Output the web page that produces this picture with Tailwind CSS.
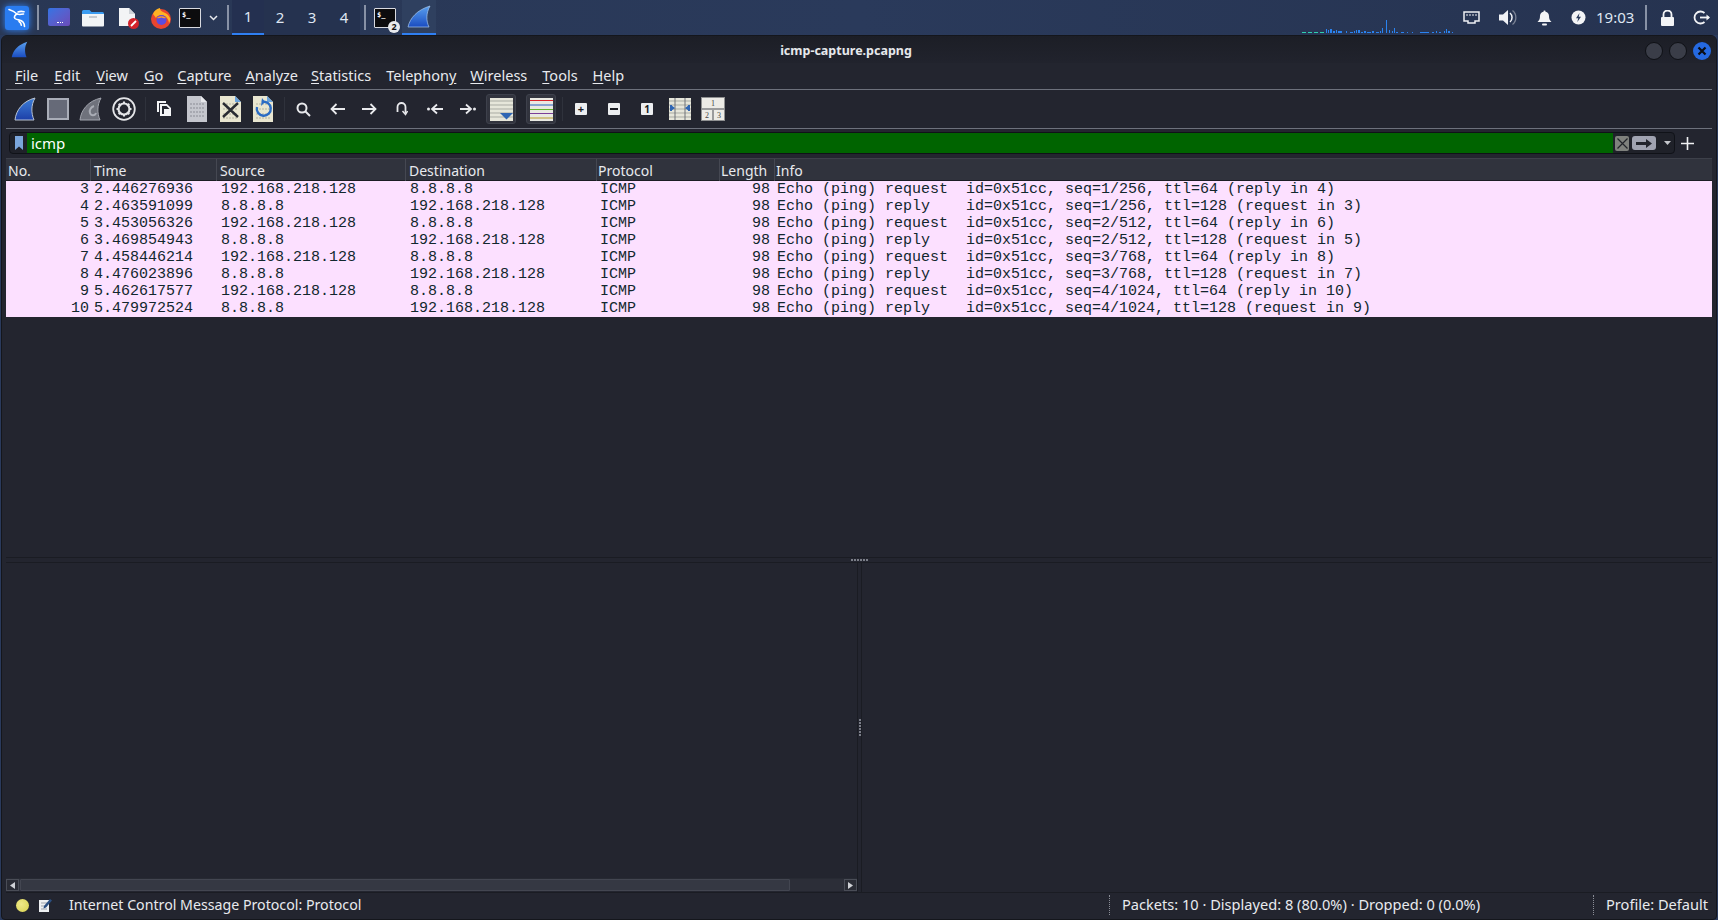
<!DOCTYPE html>
<html>
<head>
<meta charset="utf-8">
<script src="https://cdn.jsdelivr.net/npm/@tailwindcss/browser@4"></script>
<title>icmp-capture.pcapng</title>
</head>
<body class="w-[1718px] h-[920px] overflow-hidden bg-[#2a3a5c] font-['Noto_Sans','Open_Sans',sans-serif] text-[14px] text-[#e8eaee]">
<svg width="0" height="0" class="absolute">
  <defs>
    <linearGradient id="fin" x1="0" y1="0" x2="0" y2="1"><stop offset="0" stop-color="#3d7fd8"/><stop offset="1" stop-color="#1c3fa8"/></linearGradient>
    <linearGradient id="finb" x1="0" y1="0" x2="0" y2="1"><stop offset="0" stop-color="#5aa0ee"/><stop offset="1" stop-color="#1a4cc0"/></linearGradient>
  </defs>
</svg>

<!-- top panel -->
<header class="h-[35px] flex items-stretch bg-gradient-to-r from-[#293754] via-[#2a3a5b] to-[#263350] relative">
  <div class="w-[34px] flex items-center justify-center">
    <div class="w-[24px] h-[24px] rounded-[3px] bg-[#2a7cf0] shadow-[0_0_7px_#2f86ff] flex items-center justify-center">
      <svg width="22" height="22" viewBox="0 0 22 22" fill="none" stroke="#fff" stroke-width="1.6" stroke-linecap="round" stroke-linejoin="round"><path d="M3 2.500c3.500 1 6 2.500 8 4.500 2 .8 4 .5 6.500 0"/><path d="M12 5c2-.8 4-.8 6-.2"/><path d="M11 7c-2 1-3.500 3-2 4.500 2 1.800 6 1 8 3.500 1 1.300 1.500 3 1.500 4.500"/><path d="M13 14.500c1.500.8 2.200 2.300 2.300 3.700"/></svg>
    </div>
  </div>
  <div class="w-[2px] h-[25px] self-center bg-[#8892a6] ml-[3px]"></div>
  <div class="ml-[9px] w-[22px] self-center h-[18px] rounded-[2px] bg-gradient-to-br from-[#2f74e4] to-[#6a4bb8] relative mt-[-1px]"><span class="absolute bottom-[3px] left-[9px] w-[6px] h-[1px] border-b border-dotted border-white"></span></div>
  <svg class="ml-[12px] self-center" width="22" height="18" viewBox="0 0 22 18"><path d="M0 2.500a1.500 1.500 0 0 1 1.500-1.500h6l2 2h11a1.500 1.500 0 0 1 1.500 1.500v1H0z" fill="#3b9cf2"/><path d="M0 5h22v11.500a1 1 0 0 1-1 1H1a1 1 0 0 1-1-1z" fill="#f2f4f6"/><rect x="7" y="7" width="8" height="2" fill="#c6cbd2"/></svg>
  <svg class="ml-[14px] self-center" width="22" height="22" viewBox="0 0 22 22"><path d="M1 1h10l6 6v12H1z" fill="#f3f4f5"/><path d="M11 1l6 6h-6z" fill="#cfd3d8"/><circle cx="15.500" cy="16.500" r="5.500" fill="#d3232b"/><path d="M13 19l5-5" stroke="#fff" stroke-width="1.800"/></svg>
  <svg class="ml-[10px] self-center" width="22" height="22" viewBox="0 0 22 22"><circle cx="11" cy="12" r="10" fill="#e8452f"/><path d="M3 7c1-3 4-5.500 7-6 0 2 1 3 3 4 3 1 6 3 7 6 .5 2-.5 5-1 5-.5-4-3-7-6-7.500C9 8 7 9 6 11z" fill="#ffb224"/><circle cx="11.500" cy="13" r="5" fill="#5a4de0"/><path d="M7 11c2-2.500 7-2.500 9 0-2 .6-3 .3-4.500-.5-1.500.7-3 1-4.500.5z" fill="#ff9a2b"/></svg>
  <div class="ml-[7px] self-center w-[22px] h-[20px] bg-[#0c0c0e] border border-[#d8dae0] rounded-[1px] text-white font-['DejaVu_Sans_Mono',monospace] text-[7px] font-bold leading-[12px] pl-[2px]">$_</div>
  <svg class="ml-[8px] self-center" width="9" height="6" viewBox="0 0 9 6" fill="none" stroke="#e8eaee" stroke-width="1.500"><path d="M1 1l3.500 3.500L8 1"/></svg>
  <div class="w-[2px] h-[25px] self-center bg-[#8892a6] ml-[9px]"></div>
  <div class="ml-[3px] flex text-[15px] text-[#dfe6f2]">
    <div class="w-[32px] flex items-center justify-center bg-[#243050] border-b-[2px] border-[#2f7ff2]">1</div>
    <div class="w-[32px] flex items-center justify-center bg-[#25324f]">2</div>
    <div class="w-[32px] flex items-center justify-center bg-[#25324f]">3</div>
    <div class="w-[32px] flex items-center justify-center bg-[#25324f]">4</div>
  </div>
  <div class="w-[2px] h-[25px] self-center bg-[#8892a6] ml-[4px]"></div>
  <div class="ml-[8px] relative self-center w-[22px] h-[20px] bg-[#0c0c0e] border border-[#d8dae0] rounded-[1px] text-white font-['DejaVu_Sans_Mono',monospace] text-[7px] font-bold leading-[12px] pl-[2px]">$_<span class="absolute right-[-5px] bottom-[-6px] w-[12px] h-[12px] rounded-full bg-[#e8eaee] text-[#111] text-[9px] leading-[12px] text-center font-['Noto_Sans'] font-bold pl-0">2</span></div>
  <div class="ml-[6px] w-[34px] flex items-center justify-center bg-[#2f405f] border-b-[2px] border-[#2f7ff2]">
    <svg width="24" height="24" viewBox="0 0 24 24"><path d="M1 22C3 13 10 5 23 1c-4 7-4 15-1 21z" fill="url(#finb)" stroke="#a6c8ef" stroke-width=".7"/></svg>
  </div>
  <div class="flex-1"></div>
  <!-- net graph -->
  <svg class="absolute left-[1302px] top-[18px]" width="155" height="17" viewBox="0 0 155 17">
    <g fill="#2fd0b0"><rect x="0" y="14" width="4" height="1"/><rect x="6" y="14" width="4" height="1"/><rect x="12" y="14" width="4" height="1"/><rect x="18" y="14" width="4" height="1"/></g>
    <g fill="#2a83f0"><rect x="24" y="11" width="1" height="4"/><rect x="26" y="12" width="1" height="3"/><rect x="28" y="11" width="2" height="4"/><rect x="31" y="13" width="2" height="2"/><rect x="34" y="12" width="1" height="3"/><rect x="36" y="13" width="4" height="2"/><rect x="44" y="13" width="1" height="2"/><rect x="48" y="14" width="3" height="1"/><rect x="52" y="13" width="1" height="2"/><rect x="54" y="12" width="1" height="3"/><rect x="56" y="12" width="2" height="3"/><rect x="59" y="14" width="2" height="1"/><rect x="62" y="13" width="2" height="2"/><rect x="65" y="14" width="4" height="1"/><rect x="70" y="13" width="2" height="2"/><rect x="74" y="14" width="3" height="1"/><rect x="78" y="13" width="1" height="2"/><rect x="80" y="10" width="1" height="5"/><rect x="84" y="14" width="1" height="1"/><rect x="87" y="12" width="1" height="3"/><rect x="90" y="13" width="1" height="2"/><rect x="92" y="10" width="1" height="5"/><rect x="94" y="14" width="2" height="1"/><rect x="84" y="2" width="1" height="13"/><rect x="99" y="14" width="3" height="1"/><rect x="105" y="14" width="1" height="1"/><rect x="110" y="14" width="1" height="1"/><rect x="118" y="14" width="9" height="1"/><rect x="130" y="14" width="2" height="1"/><rect x="134" y="13" width="1" height="2"/><rect x="137" y="14" width="2" height="1"/><rect x="142" y="13" width="1" height="2"/><rect x="144" y="11" width="1" height="4"/><rect x="146" y="13" width="2" height="2"/><rect x="150" y="14" width="1" height="1"/></g>
  </svg>
  <div class="flex items-center">
    <svg class="mr-[19px]" width="17" height="13" viewBox="0 0 17 13" fill="none" stroke="#eef0f4" stroke-width="1.500"><path d="M1 1h15v9h-4v2H5v-2H1z"/><path d="M4 3v2M7 3v2M10 3v2M13 3v2" stroke-width="1"/></svg>
    <svg class="mr-[20px]" width="18" height="17" viewBox="0 0 18 17"><path d="M0 5.500h4L9 1v15l-5-4.500H0z" fill="#f0f2f6"/><path d="M11 4a6 6 0 0 1 0 9" fill="none" stroke="#f0f2f6" stroke-width="1.500"/><path d="M13.500 1.500a9 9 0 0 1 0 14" fill="none" stroke="#7a8294" stroke-width="1.300"/></svg>
    <svg class="mr-[19px]" width="15" height="16" viewBox="0 0 15 16"><path d="M7.500 0.500a1 1 0 0 1 1 1.200 4.500 4.500 0 0 1 3.500 4.300c0 3 .8 4.500 2.500 6H.5C2.200 10.500 3 9 3 6a4.500 4.500 0 0 1 3.500-4.300 1 1 0 0 1 1-1.200z" fill="#f3f4f6"/><rect x="5" y="13.500" width="5" height="2" rx="1" fill="#f3f4f6"/></svg>
    <svg class="mr-[10px]" width="15" height="15" viewBox="0 0 15 15"><circle cx="7.500" cy="7.500" r="7" fill="#f3f4f6"/><path d="M8.500 3L5 8.200h2.200L6.300 12l3.700-5.300H7.700z" fill="#2a3a5b"/></svg>
    <span class="text-[15px] text-[#dfe6f2] mr-[12px] w-[37px]">19:03</span>
    <div class="w-[2px] h-[25px] bg-[#8892a6] mr-[13px]"></div>
    <svg class="mr-[18px]" width="15" height="16" viewBox="0 0 15 16"><path d="M3.500 7V4.500a4 4 0 0 1 8 0V7" fill="none" stroke="#f3f4f6" stroke-width="1.800"/><rect x="1" y="7" width="13" height="9" rx="1" fill="#f3f4f6"/></svg>
    <svg class="mr-[6px]" width="19" height="15" viewBox="0 0 19 15" fill="none" stroke="#f3f4f6" stroke-width="1.800"><path d="M11.500 3A6 6 0 1 0 11.500 12"/><path d="M7 7.500h9"/><path d="M13.500 4.500l3.500 3-3.500 3z" fill="#f3f4f6" stroke="none"/></svg>
  </div>
</header>

<!-- window -->
<main class="h-[885px] mx-[1px] rounded-t-[6px] rounded-b-[4px] border border-[#14161c] bg-[#23252f] flex flex-col overflow-hidden">
  <div class="h-[27px] shrink-0 bg-gradient-to-b from-[#1c1e26] to-[#21232d] flex items-center relative">
    <svg class="ml-[9px]" width="17" height="17" viewBox="0 0 24 24"><path d="M1 23C3 13 10 5 23 1c-4 7-4 15-1 22z" fill="url(#finb)"/></svg>
    <div class="absolute left-0 right-[26px] top-[7px] text-center text-[12.5px] leading-[16px] font-bold text-[#e6e8ec]">icmp-capture.pcapng</div>
    <div class="ml-auto flex gap-[6px] mr-[5px] mt-[2px] relative">
      <div class="w-[18px] h-[18px] rounded-full bg-[#3a3d48] border border-[#0e1015]"></div>
      <div class="w-[18px] h-[18px] rounded-full bg-[#3a3d48] border border-[#0e1015]"></div>
      <div class="w-[18px] h-[18px] rounded-full bg-[#2569e0] flex items-center justify-center"><svg width="10" height="10" viewBox="0 0 10 10" stroke="#0b0d12" stroke-width="2.200"><path d="M1.500 1.500l7 7M8.500 1.500l-7 7"/></svg></div>
    </div>
  </div>

  <nav class="h-[27px] shrink-0 mx-[4px] flex items-center border-b border-[#6d717c] text-[14.5px]">
    <span class="ml-[9px] mr-[16px]"><span class="underline underline-offset-2">F</span>ile</span>
    <span class="mr-[16px]"><span class="underline underline-offset-2">E</span>dit</span>
    <span class="mr-[16px]"><span class="underline underline-offset-2">V</span>iew</span>
    <span class="mr-[14px]"><span class="underline underline-offset-2">G</span>o</span>
    <span class="mr-[14px]"><span class="underline underline-offset-2">C</span>apture</span>
    <span class="mr-[13px]"><span class="underline underline-offset-2">A</span>nalyze</span>
    <span class="mr-[15px]"><span class="underline underline-offset-2">S</span>tatistics</span>
    <span class="mr-[14px]">Telephon<span class="underline underline-offset-2">y</span></span>
    <span class="mr-[15px]"><span class="underline underline-offset-2">W</span>ireless</span>
    <span class="mr-[15px]"><span class="underline underline-offset-2">T</span>ools</span>
    <span><span class="underline underline-offset-2">H</span>elp</span>
  </nav>

  <!-- toolbar -->
  <div class="h-[39px] shrink-0 mx-[4px] border-b border-[#6d717c] flex items-center pl-[8px]">
    <svg width="22" height="24" viewBox="0 0 22 24"><path d="M1 23C2 13 9 4 21 1c-4 7-4 15-1 22z" fill="url(#fin)" stroke="#b9c3d2" stroke-width="1"/></svg>
    <div class="ml-[11px] w-[22px] h-[22px] bg-[#666a78] border-[2px] border-[#a9adb8]"></div>
    <svg class="ml-[10px]" width="23" height="24" viewBox="0 0 23 24"><path d="M1 23C2 13 9 4 22 1c-4 7-4 15-1 22z" fill="#6f727c" stroke="#a2a5ae" stroke-width="1"/><path d="M15 9c-3 1-5 4-4 7s5 3 6 0" fill="none" stroke="#a9acb5" stroke-width="2"/></svg>
    <svg class="ml-[10px]" width="24" height="24" viewBox="0 0 24 24" fill="none"><circle cx="12" cy="12" r="10.800" stroke="#e4e5e8" stroke-width="1.800"/><circle cx="12" cy="12" r="5.500" stroke="#e4e5e8" stroke-width="2.200"/><g stroke="#e4e5e8" stroke-width="2"><path d="M12 4.500v2.500M12 17v2.500M4.500 12H7M17 12h2.500M6.700 6.700l1.800 1.800M15.500 15.500l1.800 1.800M17.300 6.700l-1.800 1.800M8.500 15.500l-1.800 1.800"/></g></svg>
    <div class="ml-[9px] mr-[11px] w-px h-[24px] bg-[#2f323c]"></div>
    <svg width="15" height="16" viewBox="0 0 15 16"><path d="M0 0h9v2H2v9H0z" fill="#f3f4f6"/><path d="M3 3h7l4 4v8H3z" fill="#f3f4f6"/><path d="M5 5h4.500l2.500 2.500V13H5z" fill="#23252f"/><path d="M7 8h5v5H7z" fill="#f3f4f6"/></svg>
    <svg class="ml-[15px]" width="20" height="26" viewBox="0 0 20 26"><path d="M0 0h14l6 6v20H0z" fill="#c4c6cd"/><path d="M14 0l6 6h-6z" fill="#e8e9ec"/><g stroke="#898c96" stroke-width="1.200" stroke-dasharray="2 1"><path d="M3 8h14M3 12h14M3 16h14M3 20h14"/></g></svg>
    <svg class="ml-[13px]" width="21" height="26" viewBox="0 0 21 26"><path d="M0 0h15l6 6v20H0z" fill="#e9e6d0"/><path d="M15 0l6 6h-6z" fill="#6aa3dc"/><g stroke="#b3b19f" stroke-width="1.200" stroke-dasharray="2 1"><path d="M3 8h15M3 13h15M3 18h15M3 22h15"/></g><path d="M3 7l15 14M18 7L3 21" stroke="#2a2c33" stroke-width="2.400"/></svg>
    <svg class="ml-[12px]" width="20" height="26" viewBox="0 0 20 26"><path d="M0 0h14l6 6v20H0z" fill="#e9e6d0"/><path d="M14 0l6 6h-6z" fill="#6aa3dc"/><g stroke="#b3b19f" stroke-width="1.200" stroke-dasharray="2 1"><path d="M3 8h14M3 13h14M3 18h14M3 22h14"/></g><path d="M9 6a7 7 0 1 1-5 5" fill="none" stroke="#2b6cc4" stroke-width="2.400"/><path d="M9 2l-1 8 4-4z" fill="#2b6cc4"/></svg>
    <div class="ml-[11px] mr-[11px] w-px h-[24px] bg-[#2f323c]"></div>
    <svg width="15" height="15" viewBox="0 0 15 15" fill="none" stroke="#e8e9ec" stroke-width="2"><circle cx="6" cy="6" r="4.500"/><path d="M9.500 9.500L14 14"/></svg>
    <svg class="ml-[19px]" width="15" height="12" viewBox="0 0 15 12" fill="none" stroke="#e8e9ec" stroke-width="1.800"><path d="M15 6H2M6.500 1L1.500 6l5 5"/></svg>
    <svg class="ml-[17px]" width="15" height="12" viewBox="0 0 15 12" fill="none" stroke="#e8e9ec" stroke-width="1.800"><path d="M0 6h13M8.500 1l5 5-5 5"/></svg>
    <svg class="ml-[19px]" width="12" height="14" viewBox="0 0 12 14" fill="none" stroke="#e8e9ec" stroke-width="1.800"><path d="M1.500 10V5a4 4 0 0 1 8 0v6"/><path d="M6.500 9l3 3.500 2-3.500" stroke-width="1.500"/></svg>
    <svg class="ml-[19px]" width="16" height="12" viewBox="0 0 16 12" fill="none" stroke="#e8e9ec" stroke-width="1.800"><circle cx="1.500" cy="6" r="1.500" fill="#e8e9ec" stroke="none"/><path d="M16 6H6M10 1.500L5 6l5 4.500"/></svg>
    <svg class="ml-[17px]" width="16" height="12" viewBox="0 0 16 12" fill="none" stroke="#e8e9ec" stroke-width="1.800"><circle cx="14.500" cy="6" r="1.500" fill="#e8e9ec" stroke="none"/><path d="M0 6h10M6 1.500L11 6l-5 4.500"/></svg>
    <div class="ml-[10px] w-[30px] h-[30px] rounded-[3px] bg-[#32343e] border border-[#3e414c] flex items-center justify-center">
      <svg width="23" height="23" viewBox="0 0 23 23"><rect width="23" height="23" fill="#e6e6da"/><g stroke="#a9aba3"><path d="M0 3h23M0 7h23M0 11h23M0 15h23M0 19h23"/></g><path d="M10 15h13l-6.500 6.500z" fill="#2f66b4"/></svg>
    </div>
    <div class="ml-[10px] w-[30px] h-[30px] rounded-[3px] bg-[#32343e] border border-[#3e414c] flex items-center justify-center">
      <svg width="23" height="23" viewBox="0 0 23 23"><rect width="23" height="23" fill="#e9e9e2"/><path d="M0 2.500h23" stroke="#d8232a" stroke-width="1"/><path d="M0 7h23" stroke="#2a5fc0" stroke-width="1"/><path d="M0 11.500h23" stroke="#63b52e" stroke-width="1"/><path d="M0 15.500h23" stroke="#7a3f98" stroke-width="1"/><path d="M0 20h23" stroke="#b59a2a" stroke-width="1"/></svg>
    </div>
    <div class="ml-[6px] mr-[12px] w-px h-[24px] bg-[#2f323c]"></div>
    <div class="w-[12px] h-[12px] rounded-[1px] bg-[#eceef0] text-[#1a1c22] text-[11px] leading-[11px] font-bold text-center">+</div>
    <div class="ml-[21px] w-[12px] h-[12px] rounded-[1px] bg-[#eceef0] relative"><span class="absolute left-[2px] right-[2px] top-[5px] h-[2px] bg-[#1a1c22]"></span></div>
    <div class="ml-[21px] w-[12px] h-[12px] rounded-[1px] bg-[#eceef0] text-[#1a1c22] text-[10px] leading-[12px] font-bold text-center">1</div>
    <svg class="ml-[16px]" width="22" height="22" viewBox="0 0 22 22"><rect width="22" height="22" fill="#e6e6da"/><g stroke="#a9aba3"><path d="M0 3h22M0 7h22M0 11h22M0 15h22M0 19h22"/></g><path d="M6 0v22M16 0v22" stroke="#6f7278"/><path d="M2 7l4 3-4 3zM20 7l-4 3 4 3z" fill="#2f66b4"/><path d="M2 7v6M20 7v6" stroke="#2f66b4" stroke-width="2"/></svg>
    <div class="ml-[10px] w-[24px] h-[24px] bg-[#9a9b9c] border border-[#8f9091] grid grid-cols-2 grid-rows-2 gap-[2px] font-['Liberation_Serif',serif] text-[8px] text-[#444] text-center leading-[11px]">
      <div class="col-span-2 bg-[#ecebe6]">1</div><div class="bg-[#ecebe6]">2</div><div class="bg-[#ecebe6]">3</div>
    </div>
  </div>

  <!-- filter -->
  <div class="h-[24px] shrink-0 mt-[2px] flex items-center">
    <div class="ml-[7px] w-[1666px] h-[22px] rounded-[4px] border border-[#101218] bg-[#1f2129] flex items-center overflow-hidden">
      <div class="w-[17px] flex justify-center shrink-0">
        <svg width="8" height="14" viewBox="0 0 8 14"><path d="M0 0h8v14L4 10.500 0 14z" fill="#7ba6dc"/></svg>
      </div>
      <div class="w-[1586px] h-full bg-[#006400] text-white px-[4px] leading-[20px] text-[15px]">icmp</div>
      <div class="ml-[2px] w-[14px] h-[15px] rounded-[2px] bg-[#7f817d] flex items-center justify-center"><svg width="11" height="11" viewBox="0 0 11 11" stroke="#22242a" stroke-width="1.200"><path d="M.5.5l10 10M10.500.5l-10 10"/></svg></div>
      <div class="ml-[3px] w-[24px] h-[14px] rounded-[3px] bg-[#a0a3b1] flex items-center justify-center"><svg width="16" height="9" viewBox="0 0 16 9"><path d="M0 3h10V0l6 4.500L10 9V6H0z" fill="#22242c"/></svg></div>
      <svg class="ml-[8px]" width="7" height="4" viewBox="0 0 7 4"><path d="M0 0h7L3.500 4z" fill="#c5c7cc"/></svg>
    </div>
    <svg class="ml-[6px]" width="13" height="13" viewBox="0 0 13 13" stroke="#f0f1f3" stroke-width="1.600"><path d="M6.500 0v13M0 6.500h13"/></svg>
  </div>

  <!-- packet list -->
  <section class="h-[400px] shrink-0 mx-[4px] mt-[3px] border-b border-[#1a1c23] flex flex-col">
    <div class="h-[23px] shrink-0 bg-[#30333d] border-t border-[#3d404a] border-b border-b-[#1b1d24] grid grid-cols-[85px_126px_189px_191px_123px_55px_1fr] leading-[23px] text-[#e8eaee]">
      <div class="pl-[2px] border-r border-[#454852]">No.</div>
      <div class="pl-[3px] border-r border-[#454852]">Time</div>
      <div class="pl-[3px] border-r border-[#454852]">Source</div>
      <div class="pl-[3px] border-r border-[#454852]">Destination</div>
      <div class="pl-[1px] border-r border-[#454852]">Protocol</div>
      <div class="pl-[1px] border-r border-[#454852]">Length</div>
      <div class="pl-[1px]">Info</div>
    </div>
    <div class="bg-[#fce0ff] text-[#12272e] font-['Liberation_Mono',monospace] text-[15px] leading-[17px]">
      <div class="grid grid-cols-[83px_2px_127px_189px_191px_122px_50px_1fr] h-[17px]"><div class="text-right">3</div><div></div><div class="pl-[3px]">2.446276936</div><div class="pl-[3px]">192.168.218.128</div><div class="pl-[3px]">8.8.8.8</div><div class="pl-[2px]">ICMP</div><div class="text-right">98</div><div class="pl-[7px] whitespace-pre">Echo (ping) request  id=0x51cc, seq=1/256, ttl=64 (reply in 4)</div></div>
      <div class="grid grid-cols-[83px_2px_127px_189px_191px_122px_50px_1fr] h-[17px]"><div class="text-right">4</div><div></div><div class="pl-[3px]">2.463591099</div><div class="pl-[3px]">8.8.8.8</div><div class="pl-[3px]">192.168.218.128</div><div class="pl-[2px]">ICMP</div><div class="text-right">98</div><div class="pl-[7px] whitespace-pre">Echo (ping) reply    id=0x51cc, seq=1/256, ttl=128 (request in 3)</div></div>
      <div class="grid grid-cols-[83px_2px_127px_189px_191px_122px_50px_1fr] h-[17px]"><div class="text-right">5</div><div></div><div class="pl-[3px]">3.453056326</div><div class="pl-[3px]">192.168.218.128</div><div class="pl-[3px]">8.8.8.8</div><div class="pl-[2px]">ICMP</div><div class="text-right">98</div><div class="pl-[7px] whitespace-pre">Echo (ping) request  id=0x51cc, seq=2/512, ttl=64 (reply in 6)</div></div>
      <div class="grid grid-cols-[83px_2px_127px_189px_191px_122px_50px_1fr] h-[17px]"><div class="text-right">6</div><div></div><div class="pl-[3px]">3.469854943</div><div class="pl-[3px]">8.8.8.8</div><div class="pl-[3px]">192.168.218.128</div><div class="pl-[2px]">ICMP</div><div class="text-right">98</div><div class="pl-[7px] whitespace-pre">Echo (ping) reply    id=0x51cc, seq=2/512, ttl=128 (request in 5)</div></div>
      <div class="grid grid-cols-[83px_2px_127px_189px_191px_122px_50px_1fr] h-[17px]"><div class="text-right">7</div><div></div><div class="pl-[3px]">4.458446214</div><div class="pl-[3px]">192.168.218.128</div><div class="pl-[3px]">8.8.8.8</div><div class="pl-[2px]">ICMP</div><div class="text-right">98</div><div class="pl-[7px] whitespace-pre">Echo (ping) request  id=0x51cc, seq=3/768, ttl=64 (reply in 8)</div></div>
      <div class="grid grid-cols-[83px_2px_127px_189px_191px_122px_50px_1fr] h-[17px]"><div class="text-right">8</div><div></div><div class="pl-[3px]">4.476023896</div><div class="pl-[3px]">8.8.8.8</div><div class="pl-[3px]">192.168.218.128</div><div class="pl-[2px]">ICMP</div><div class="text-right">98</div><div class="pl-[7px] whitespace-pre">Echo (ping) reply    id=0x51cc, seq=3/768, ttl=128 (request in 7)</div></div>
      <div class="grid grid-cols-[83px_2px_127px_189px_191px_122px_50px_1fr] h-[17px]"><div class="text-right">9</div><div></div><div class="pl-[3px]">5.462617577</div><div class="pl-[3px]">192.168.218.128</div><div class="pl-[3px]">8.8.8.8</div><div class="pl-[2px]">ICMP</div><div class="text-right">98</div><div class="pl-[7px] whitespace-pre">Echo (ping) request  id=0x51cc, seq=4/1024, ttl=64 (reply in 10)</div></div>
      <div class="grid grid-cols-[83px_2px_127px_189px_191px_122px_50px_1fr] h-[17px]"><div class="text-right">10</div><div></div><div class="pl-[3px]">5.479972524</div><div class="pl-[3px]">8.8.8.8</div><div class="pl-[3px]">192.168.218.128</div><div class="pl-[2px]">ICMP</div><div class="text-right">98</div><div class="pl-[7px] whitespace-pre">Echo (ping) reply    id=0x51cc, seq=4/1024, ttl=128 (request in 9)</div></div>
    </div>
  </section>

  <!-- horizontal splitter -->
  <div class="h-[4px] shrink-0 flex items-center justify-center gap-[1px]">
    <span class="w-[2px] h-[2px] bg-[#7b7e88]"></span><span class="w-[2px] h-[2px] bg-[#7b7e88]"></span><span class="w-[2px] h-[2px] bg-[#7b7e88]"></span><span class="w-[2px] h-[2px] bg-[#7b7e88]"></span><span class="w-[2px] h-[2px] bg-[#7b7e88]"></span><span class="w-[2px] h-[2px] bg-[#7b7e88]"></span>
  </div>

  <!-- lower panes -->
  <section class="h-[331px] shrink-0 mx-[4px] flex border-t border-b border-[#1a1c23]">
    <div class="w-[851px] flex flex-col justify-end">
      <div class="h-[13px] mb-[1px] flex bg-[#30333d] border-t border-[#272a33]">
        <div class="w-[13px] bg-[#2a2c35] border border-[#4a4d57] flex items-center justify-center"><svg width="5" height="7" viewBox="0 0 5 7"><path d="M5 0v7L0 3.500z" fill="#cfd1d6"/></svg></div>
        <div class="w-[770px] ml-[1px] bg-[#353843] border border-[#434651] rounded-[1px]"></div>
        <div class="flex-1 bg-[#2c2e38]"></div>
        <div class="w-[13px] bg-[#2a2c35] border border-[#4a4d57] flex items-center justify-center"><svg width="5" height="7" viewBox="0 0 5 7"><path d="M0 0v7l5-3.500z" fill="#cfd1d6"/></svg></div>
      </div>
    </div>
    <div class="w-[5px] shrink-0 border-l border-r border-[#1a1c23] flex flex-col items-center justify-center gap-[1px]">
      <span class="w-[2px] h-[2px] bg-[#7b7e88]"></span><span class="w-[2px] h-[2px] bg-[#7b7e88]"></span><span class="w-[2px] h-[2px] bg-[#7b7e88]"></span><span class="w-[2px] h-[2px] bg-[#7b7e88]"></span><span class="w-[2px] h-[2px] bg-[#7b7e88]"></span><span class="w-[2px] h-[2px] bg-[#7b7e88]"></span>
    </div>
    <div class="flex-1"></div>
  </section>

  <!-- status bar -->
  <footer class="flex-1 flex items-center relative pb-[2px]">
    <span class="ml-[14px] w-[13px] h-[13px] rounded-full bg-[radial-gradient(circle_at_40%_40%,#efe98a,#d8d24c)]"></span>
    <svg class="ml-[10px]" width="13" height="14" viewBox="0 0 13 14"><path d="M0 2h10v12H0z" fill="#eef0f2"/><g stroke="#9da3ab"><path d="M2 5h6M2 8h6M2 11h6"/></g><path d="M5 8l6-7 2 1.500-6 7-2.500 1z" fill="#2b4f82"/></svg>
    <span class="ml-[17px] w-[1040px] text-[14.2px]">Internet Control Message Protocol: Protocol</span>
    <div class="h-[20px] border-l border-dotted border-[#8a8d96]"></div>
    <span class="ml-[12px] w-[471px] text-[14.6px]">Packets: 10 · Displayed: 8 (80.0%) · Dropped: 0 (0.0%)</span>
    <div class="h-[20px] border-l border-dotted border-[#8a8d96]"></div>
    <span class="ml-[12px] text-[14.6px]">Profile: Default</span>
  </footer>
</main>
</body>
</html>
